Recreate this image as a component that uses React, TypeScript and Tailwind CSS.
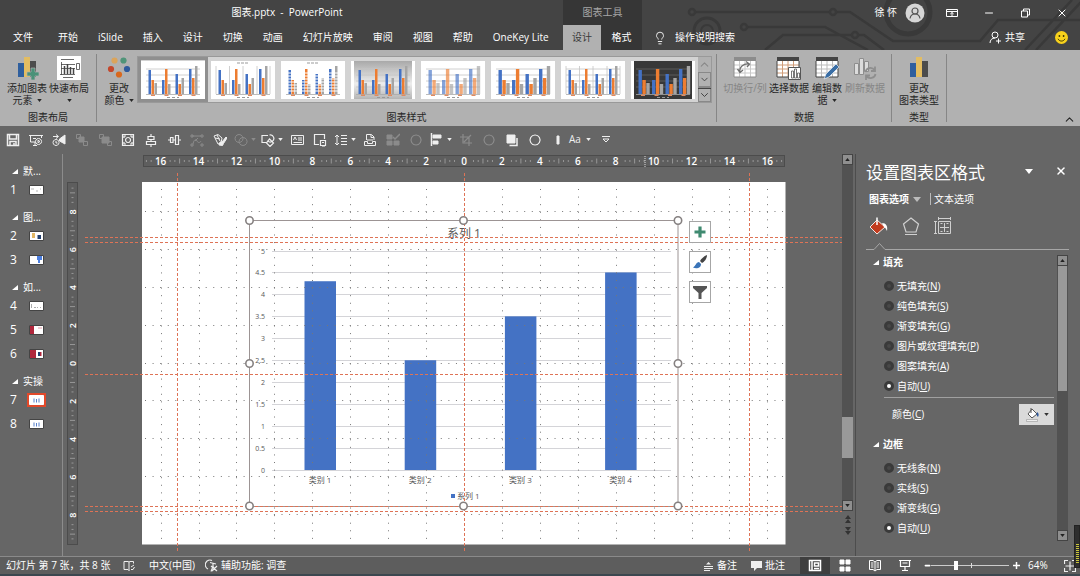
import React, { ReactNode } from 'react';
import clsx from 'clsx';
import { ChevronDown, ChevronUp, Lightbulb, Minus, X } from 'lucide-react';

const BLUE = '#4472c4';
const ORANGE = '#ed7d31';
const GUIDE = '#de7356';

const tabs = ['开始', 'iSlide', '插入', '设计', '切换', '动画', '幻灯片放映', '审阅', '视图', '帮助', 'OneKey Lite'];

const Caret = ({ className }: { className?: string }) => (
  <svg viewBox="0 0 6 4" width="5" height="3" className={clsx('inline-block shrink-0', className)} fill="currentColor">
    <path d="M0 0h6L3 4z" />
  </svg>
);

/* ---------- Title bar ---------- */

function Circuit() {
  return (
    <svg className="pointer-events-none absolute top-0 right-0" width="400" height="50" viewBox="680 0 400 50" fill="none" stroke="#393939" strokeWidth="2.5">
      <path d="M695 12H829M836 12H850L893 41H980L998 20H1080M748 27H825L868 50M765 50L783 35H852M858 35H864L884 50M1025 50L1072 0M1036 50L1083 0" />
      <circle cx="692" cy="12" r="3" />
      <circle cx="833" cy="12" r="3" />
      <circle cx="744" cy="27" r="3" />
      <circle cx="855" cy="35" r="3" />
      <circle cx="707" cy="31" r="13" strokeWidth="3" />
      <circle cx="707" cy="31" r="6" strokeWidth="2" />
      <circle cx="908" cy="12" r="22" strokeWidth="5" />
    </svg>
  );
}

function TitleBar() {
  return (
    <header className="relative bg-[#444444] text-white">
      <Circuit />
      <div className="relative flex h-[25px] items-center">
        <h1 className="w-[563px] pl-[11px] text-center text-[10px] whitespace-pre">图表.pptx  -  PowerPoint</h1>
        <div className="flex h-full w-[79px] items-center justify-center bg-[#363636] text-[10px] text-[#a6a6a6]">图表工具</div>
        <div className="ml-auto flex items-center">
          <span className="text-[10px]">徐 怀</span>
          <svg className="ml-2" width="20" height="20" viewBox="0 0 20 20">
            <circle cx="10" cy="10" r="9.5" fill="#d6d6d6" />
            <g fill="none" stroke="#555" strokeWidth="1.2">
              <circle cx="10" cy="8" r="3" />
              <path d="M5 15.5c.5-3 2.500-4.500 5-4.500s4.500 1.500 5 4.500" />
            </g>
          </svg>
          <button aria-label="功能区显示选项" className="ml-[21px]">
            <svg width="12" height="10" viewBox="0 0 12 10" fill="none" stroke="#fff">
              <path d="M.5 1.500h11v7H.5zM.5 3.500h11M6 8V4.500M4.300 6L6 4.500 7.700 6" />
            </svg>
          </button>
          <button aria-label="最小化" className="ml-[25px]"><Minus size={12} strokeWidth={2} /></button>
          <button aria-label="还原" className="ml-[25px]">
            <svg width="11" height="10" viewBox="0 0 11 10" fill="none" stroke="#fff">
              <path d="M1.500 3h6v6h-6zM3.500 3V1h6v6h-2" />
            </svg>
          </button>
          <button aria-label="关闭" className="mr-3 ml-[25px]"><X size={12} strokeWidth={2} /></button>
        </div>
      </div>
      <nav className="relative flex h-[25px] items-center text-[10px]">
        <div className="flex w-[563px] items-center">
          <button className="mr-[5px] ml-[3px] px-[10px] whitespace-nowrap">文件</button>
          {tabs.map(t => (
            <button key={t} className="px-[10px] whitespace-nowrap">{t}</button>
          ))}
        </div>
        <button className="h-full w-[38px] bg-[#b1b1b1] text-[#3a3a3a]">设计</button>
        <button className="h-full w-[41px] bg-[#363636]">格式</button>
        <label className="ml-[11px] flex items-center">
          <Lightbulb size={14} strokeWidth={1.500} />
          <input placeholder="操作说明搜索" className="ml-2 w-20 bg-transparent outline-none placeholder:text-white" />
        </label>
        <button className="ml-auto flex items-center gap-1">
          <svg width="12" height="13" viewBox="0 0 12 13" fill="none" stroke="#fff">
            <circle cx="6" cy="4" r="3" />
            <path d="M1 12c0-3 2-5 5-5M9.500 7.500v5M7 10h5" />
          </svg>
          共享
        </button>
        <svg className="mr-3 ml-[30px]" width="13" height="13" viewBox="0 0 13 13">
          <circle cx="6.5" cy="6.5" r="6.500" fill="#f8d21c" />
          <circle cx="4.4" cy="5" r=".9" fill="#3a3200" />
          <circle cx="8.600" cy="5" r=".9" fill="#3a3200" />
          <path d="M3 7.800c1.500 3 5.500 3 7 0" fill="none" stroke="#3a3200" />
        </svg>
      </nav>
    </header>
  );
}

/* ---------- Ribbon ---------- */

const ChartIcon = ({ plus }: { plus?: boolean }) => (
  <svg width="24" height="24" viewBox="0 0 24 24">
    <path d="M3 7h6v14H3z" fill="#2f5f9e" />
    <path d="M9 1h6v20H9z" fill="#e3bd62" />
    <path d="M15 5h6v16h-6z" fill="#4c4c4c" />
    {plus && <path d="M17 13h4v4h4v4h-4v4h-4v-4h-4v-4h4z" fill="#4a9178" stroke="#b1b1b1" strokeWidth=".7" transform="translate(-1 -1)" />}
  </svg>
);

const LayoutIcon = () => (
  <svg width="24" height="24" viewBox="0 0 24 24" fill="none" stroke="#444">
    <path d="M0 0h24v24H0z" fill="#fff" stroke="none" />
    <path d="M4 3.500h13M4.500 6v13M3 18.500h15M4 8.500h14M4 12.500h14M19.500 7.500h3v6h-3zM6 21.500h10" strokeWidth=".8" />
    <path d="M7.500 10v8M10.500 8v10M13.500 11v7M16.500 12v6" strokeWidth="1.500" />
  </svg>
);

const ColorsIcon = () => (
  <svg width="24" height="24" viewBox="0 0 24 24">
    <circle cx="7.500" cy="4.500" r="3.100" fill="#dba45b" />
    <circle cx="16.500" cy="4.500" r="3.100" fill="#4f9478" />
    <circle cx="4" cy="13" r="3.100" fill="#c4472b" />
    <circle cx="20" cy="13" r="3.100" fill="#2f5a9c" />
    <circle cx="12" cy="18.500" r="3.100" fill="#d9681d" />
  </svg>
);

const SheetGrid = ({ head, line }: { head: string; line: string }) => (
  <>
    <path d="M1 1h22v20H1z" fill="#fff" />
    <path d="M1 1h22v4H1z" fill={head} />
    <path d="M1 9h22M1 13h22M1 17h22M6.500 5v16M12 5v16M17.500 5v16" stroke={line} />
    <path d="M1 5v16h22V5" fill="none" stroke={head} />
  </>
);

const SwitchIcon = () => (
  <svg width="24" height="24" viewBox="0 0 24 24">
    <SheetGrid head="#8c8c8c" line="#c9c9c9" />
    <path d="M7 16c-1-5 4-9 9-8M13 5.500l3.500 2.500L14 11M4.500 13l2.500 3.500 3-2.500" fill="none" stroke="#6f6f6f" strokeWidth="1.300" />
  </svg>
);

const SelectIcon = () => (
  <svg width="26" height="24" viewBox="0 0 26 24">
    <SheetGrid head="#444" line="#cf9c78" />
    <path d="M12.500 11.500h12v12h-12z" fill="#fff" stroke="#555" />
    <path d="M15.500 15v7h2v-7zM18.500 13v9h2v-9zM21.500 17v5h2v-5z" fill="none" stroke="#555" strokeWidth=".8" />
  </svg>
);

const EditIcon = () => (
  <svg width="24" height="24" viewBox="0 0 24 24">
    <SheetGrid head="#444" line="#bbb" />
    <path d="M9 23l2-5L21 8l3 3-10 10z" fill="#3a6ea5" stroke="#fff" strokeWidth=".6" />
  </svg>
);

const RefreshIcon = () => (
  <svg width="24" height="24" viewBox="0 0 24 24" fill="none" stroke="#8e8e8e">
    <path d="M1.500 7.500h4v11h-4zM6.500 2.500h4v16h-4zM11.500 5.500h4v10h-4z" fill="#dcdcdc" />
    <path d="M12.500 16a5 5 0 0 1 9-2M22.500 18a5 5 0 0 1-9 2M22 10.500V15h-4M13 24v-4.500h4" strokeWidth="1.800" />
  </svg>
);

interface BigButtonProps {
  icon: ReactNode;
  lines: string[];
  caret?: boolean;
  disabled?: boolean;
  className: string;
}

const BigButton = ({ icon, lines, caret, disabled, className }: BigButtonProps) => (
  <button disabled={disabled} className={clsx('flex flex-col items-center pt-[6px] text-[10px] leading-3 whitespace-nowrap disabled:text-[#868686]', className)}>
    <span className="mb-px flex h-[25px] items-start">{icon}</span>
    {lines.map((line, i) => (
      <span key={i} className="flex min-h-3 items-center">
        {line}
        {caret && i === lines.length - 1 && <Caret className={clsx(line && 'ml-1')} />}
      </span>
    ))}
  </button>
);

const Group = ({ label, children }: { label: string; children: ReactNode }) => (
  <section className="flex flex-col justify-between pb-[3px]">
    <div className="flex">{children}</div>
    <div className="text-center text-[10px] leading-3">{label}</div>
  </section>
);

const Divider = () => <div className="my-1 w-px shrink-0 bg-[#868686]" />;

const styleBars = [[24, 14, 11], [14, 25, 10], [20, 10, 16], [25, 16, 28]];

interface ChartStyle {
  bg: string;
  grid?: 'h' | 'v' | 'both';
  faded?: boolean;
  striped?: boolean;
  wide?: boolean;
}

const chartStyles: ChartStyle[] = [
  { bg: '#ffffff', grid: 'h' },
  { bg: '#ffffff', grid: 'v' },
  { bg: '#ffffff', striped: true },
  { bg: 'url(#grayfade)', grid: 'h' },
  { bg: '#ffffff', grid: 'h', faded: true, wide: true },
  { bg: '#ffffff', grid: 'h', wide: true },
  { bg: '#ffffff', grid: 'both' },
  { bg: '#383838', grid: 'h', wide: true },
];

function StyleThumb({ style, selected }: { style: ChartStyle; selected: boolean }) {
  const { bg, grid, faded, striped, wide } = style;
  const inset = bg === '#ffffff' ? 0 : 3;
  const w = wide ? 3.400 : 2.500;
  const line = bg === '#383838' ? '#666' : '#c4c4c4';
  return (
    <button aria-label="图表样式" className={clsx('border-[3px]', selected ? 'border-[#8f8f8f]' : 'border-transparent')}>
      <svg width="64" height="38" viewBox="0 0 64 38" className="block">
        <defs>
          <linearGradient id="grayfade" x1="0" y1="0" x2="0" y2="1">
            <stop offset="0" stopColor="#a9a9a9" />
            <stop offset=".6" stopColor="#ededed" />
            <stop offset="1" stopColor="#b5b5b5" />
          </linearGradient>
        </defs>
        <path d="M0 0h64v38H0z" fill="#fff" />
        <rect x={inset} y="0" width={64 - inset * 2} height="38" fill={bg} />
        {grid && grid !== 'v' && <path d="M5 8h54M5 14h54M5 20h54M5 26h54" stroke={line} strokeWidth=".8" />}
        {grid && grid !== 'h' && <path d="M5 5v28M18.500 5v28M32 5v28M46 5v28M59 5v28" stroke={line} strokeWidth=".8" />}
        <path d="M5 33.500h54" stroke="#aaa" strokeWidth=".8" />
        <g fillOpacity={faded ? 0.650 : 1}>
          {styleBars.map((bars, g) =>
            bars.map((h, i) => (
              <rect key={`${g}-${i}`} x={7.500 + g * 13.500 + i * (w + 0.500)} y={33 - h} width={w} height={h} fill={[BLUE, ORANGE, '#a5a5a5'][i]} />
            ))
          )}
        </g>
        {striped && <path d="M5 12h54M5 15h54M5 18h54M5 21h54M5 24h54M5 27h54M5 30h54" stroke="#fff" strokeWidth="1" />}
        {[10, 23.500, 37, 50.500].map(x => <rect key={x} x={x} y="33.500" width="4" height="1.500" fill="#e08a60" />)}
        <path d="M26 36.500h12" stroke="#999" strokeDasharray="3 2" />
        {(grid === 'v' || striped) && <path d="M26 2h12" stroke="#999" strokeDasharray="3 1" />}
      </svg>
    </button>
  );
}

function Ribbon() {
  return (
    <div className="relative flex h-[76px] bg-[#b1b1b1] text-[#262626]">
      <Group label="图表布局">
        <BigButton className="w-[42px] ml-[6px]" icon={<ChartIcon plus />} lines={['添加图表', '元素']} caret />
        <BigButton className="w-[42px] mr-[6px]" icon={<LayoutIcon />} lines={['快速布局', '']} caret />
      </Group>
      <Divider />
      <Group label="图表样式">
        <BigButton className="w-10 pl-1" icon={<ColorsIcon />} lines={['更改', '颜色']} caret />
        <div className="mt-[6px] flex h-[47px] border border-[#999] bg-[#d3d3d3]">
          {chartStyles.map((style, i) => (
            <StyleThumb key={i} style={style} selected={i === 0} />
          ))}
          <div className="flex w-[13px] flex-col bg-[#b1b1b1] text-[#444]">
            <button aria-label="向上" className="flex h-[15px] items-center justify-center text-[#888]"><ChevronUp size={13} /></button>
            <button aria-label="向下" className="flex h-[15px] items-center justify-center border border-[#888]"><ChevronDown size={13} /></button>
            <button aria-label="其他" className="flex h-[15px] flex-col items-center justify-center border border-[#888]">
              <ChevronDown size={13} className="border-t border-current" />
            </button>
          </div>
        </div>
        <div className="w-1" />
      </Group>
      <Divider />
      <Group label="数据">
        <BigButton className="w-[46px] ml-[5px]" icon={<SwitchIcon />} lines={['切换行/列']} disabled />
        <BigButton className="w-[42px]" icon={<SelectIcon />} lines={['选择数据']} />
        <BigButton className="w-[34px]" icon={<EditIcon />} lines={['编辑数', '据']} caret />
        <BigButton className="w-[42px] mr-[5px]" icon={<RefreshIcon />} lines={['刷新数据']} disabled />
      </Group>
      <Divider />
      <Group label="类型">
        <BigButton className="mx-[6px] w-[42px]" icon={<ChartIcon />} lines={['更改', '图表类型']} />
      </Group>
      <Divider />
      <button aria-label="折叠功能区" className="mt-auto mr-1 ml-auto"><ChevronUp size={13} /></button>
    </div>
  );
}

/* ---------- Quick access toolbar ---------- */

interface Tool {
  name: string;
  art: ReactNode;
  dim?: boolean;
  caret?: boolean;
}

const tools: Tool[] = [
  { name: '保存', art: <path d="M1.500 1.500h11v11h-11zM3.500 2v4h7V2M4 12V8.500h6V12M8 10v2" strokeWidth="1.500" /> },
  { name: '放映', art: <path d="M0 2.500h14M1.500 3v6h5M12.500 3v2M4 12.500h4M6 9v3M4 5.500h3M9.500 5.500a3 3 0 1 0 .1 0zM9 7.300l2 1.200-2 1.200z" /> },
  { name: '动画窗格', art: <><path d="M4 6.500a3 3 0 1 0 .1 0zM4 8v2h1.500M1 3.500h5M4 1.500l2.500 2L4 5.500" /><path d="M7.500 6L13 2v9L7.500 8z" fill="currentColor" /></> },
  { name: '上移一层', dim: true, art: <><path d="M1.500 1.500h4v4h-4zM8.500 8.500h4v4h-4z" /><path d="M4 4h5v5H4z" fill="currentColor" /></> },
  { name: '下移一层', dim: true, art: <><path d="M1.500 1.500h4v4h-4zM9.500 8.500h4v4h-4z" /><path d="M4 4h7v6H4z" fill="currentColor" /></> },
  { name: '组合', art: <path d="M1.500 1.500h11v11h-11zM7 4.500a2.500 2.500 0 1 0 .1 0zM3 5V3h2M9 3h2v2M11 9v2H9M5 11H3V9" strokeWidth="1.200" /> },
  { name: '水平居中', art: <path d="M7 1v3M4 3.500h6v3H4zM7 6.500v2M2.500 8.500h9v3h-9zM7 12v2" strokeWidth="1.200" /> },
  { name: '垂直居中', art: <path d="M1 7h2M3.500 4.500h2.500v5H3.500zM6 7h2M8.500 2.500h3v9h-3zM12 7h2" strokeWidth="1.200" /> },
  { name: '编辑顶点', dim: true, art: <path d="M2 3h9M3 11c1-5 3-5 4-3s3 2 4 0M1 2h2v2H1zM11 2h2v2h-2zM1 11h2v2H1zM11 11h2v2h-2zM8 5L5 8" /> },
  { name: '格式刷', art: <><path d="M1 3l4-1.500 4 3.500-1 5-3 1zM2 5l5 1M4 2l3 6" /><path d="M6 12l1-3 2 0 4-5 1 1-3.500 5.500-1 2z" fill="currentColor" /></> },
  { name: '合并形状', dim: true, caret: true, art: <path d="M5 1.500a4 4 0 1 0 .1 0zM9 4.500a4 4 0 1 0 .1 0z" /> },
  { name: '形状', caret: true, art: <path d="M6 9.500H1v-7h6M8.500 2a3.500 3.500 0 1 1-2 5.500M8.500 6l4 4-3.500 3.500L5.500 10z" strokeWidth="1.200" /> },
  { name: '文本框', art: <path d="M1.500 2.500h12v9h-12zM3.500 7l1.500-3 1.500 3M8 5h4M8 7h4M3.500 9.500H12" /> },
  { name: '选择窗格', art: <path d="M6 11.500H1.500v-10h10V6M7.500 7.500h5v5h-5zM9 9.500h2M9 14h3" strokeWidth="1.200" /> },
  { name: '行距', caret: true, art: <path d="M3 2v10M1 4l2-2 2 2M1 10l2 2 2-2M7 2.500h6M7 5.500h6M7 8.500h6M7 11.500h6" /> },
  { name: '打印预览', art: <path d="M3.500 7V1.500h5l2.500 2.500v3M1.500 8.500h3v2h5v-2h3v4h-11zM8 2v2.500h3M4 7h6" /> },
  { name: '选择', dim: true, art: <><path d="M1 2h5v4H1zM1 8h5v4H1zM8 8h5v4H8z" fill="currentColor" /><path d="M7 4l2 2 5-5" strokeWidth="1.500" /></> },
  { name: '椭圆', dim: true, art: <path d="M7 2a5 5 0 1 0 .1 0z" strokeWidth="1.200" /> },
  { name: '对齐', caret: true, art: <><path d="M1.500 0v13" strokeWidth="1.500" /><path d="M3 2h8v3H3zM3 8h5v3H3z" fill="currentColor" /></> },
  { name: '裁剪', dim: true, art: <path d="M4 1v9h9M1 4h9v9M5 9l7-7" strokeWidth="1.200" /> },
  { name: '圆形', dim: true, art: <path d="M7 2a5 5 0 1 0 .1 0z" strokeWidth="1.200" /> },
  { name: '置于顶层', art: <><path d="M2 2h8v8H2z" fill="currentColor" /><path d="M12 5v7.500H4.500" strokeWidth="1.500" /></> },
  { name: '圆', art: <path d="M7 2a5 5 0 1 0 .1 0z" strokeWidth="1.200" /> },
  { name: '矩形', art: <path d="M6 3h2v8H6z" fill="currentColor" /> },
];

function QuickAccess() {
  return (
    <div className="flex h-7 items-center bg-[#666666] pb-px pl-px text-[#efefef]">
      {tools.map(t => (
        <button
          key={t.name}
          aria-label={t.name}
          className={clsx('flex items-center justify-center', t.caret ? 'w-[27px] gap-[3px]' : 'w-[23px]', t.dim && 'text-[#8b8b8b]')}
        >
          <svg width="14" height="14" viewBox="0 0 14 14" fill="none" stroke="currentColor">{t.art}</svg>
          {t.caret && <Caret />}
        </button>
      ))}
      <button className="flex w-[27px] items-center gap-[5px] text-[10px]">Aa <Caret /></button>
      <button aria-label="自定义" className="ml-[6px]">
        <svg width="8" height="7" viewBox="0 0 8 7" fill="none" stroke="currentColor"><path d="M0 .5h8M1 3h6L4 6z" /></svg>
      </button>
    </div>
  );
}

/* ---------- Slide list ---------- */

const sections = [
  { title: '默...', slides: [{ n: 1, art: <path d="M2 4h3M7 6h2M11 4h1" stroke="#999" strokeWidth=".7" /> }] },
  {
    title: '图...',
    slides: [
      { n: 2, art: <><path d="M3 2h3v5H3z" fill="#e2b765" /><path d="M8.500 4h3.500v4H8.500z" fill="#24406e" /></> },
      { n: 3, art: <path d="M8 1h5v4h-2v3H9V5H8z" fill="#4c7fe0" /> },
    ],
  },
  {
    title: '如...',
    slides: [
      { n: 4, art: <path d="M2.500 3v4M5 6.500h2M8 6.500h1M11 6.500h1" stroke="#888" strokeWidth=".7" /> },
      { n: 5, art: <><path d="M1 1h4v8H1z" fill="#b0273c" /><path d="M9 3h4" stroke="#e09aa4" /></> },
      { n: 6, art: <><path d="M1 1h6v8H1z" fill="#b0273c" /><path d="M9 3h2v4H9z" fill="#24406e" /><path d="M11 3h1.500v4H11z" fill="#b0273c" /></> },
    ],
  },
  {
    title: '实操',
    slides: [
      { n: 7, art: <path d="M5 3.500v4M7.500 4v3.500M10 3.500v4" stroke={BLUE} strokeWidth=".9" /> },
      { n: 8, art: <path d="M5 3.500v4M7.500 4v3.500M10 3.500v4" stroke={BLUE} strokeWidth=".9" /> },
    ],
  },
];

function SlideList() {
  return (
    <aside className="w-[62px] shrink-0 pt-[2px]">
      {sections.map(s => (
        <div key={s.title} className="pt-2">
          <div className="flex h-[14px] items-center gap-[5px] pl-3 text-[10px]">
            <svg width="6" height="5" viewBox="0 0 6 5" fill="#fff"><path d="M6 0v5H0z" /></svg>
            {s.title}
          </div>
          {s.slides.map(({ n, art }) => (
            <button key={n} className="flex h-6 w-full items-center pl-[10px] font-['Open_Sans'] text-xs">
              <span className="w-[18px] text-left">{n}</span>
              <svg width="17" height="12" viewBox="-1 -1 17 12" className={clsx(n === 7 && 'outline-2 -outline-offset-1 outline-[#e2492a]')}>
                <path d="M.5.5h14v9H.5z" fill="#fff" stroke={n === 7 ? '#fff' : '#444'} />
                {art}
              </svg>
            </button>
          ))}
        </div>
      ))}
    </aside>
  );
}

/* ---------- Canvas ---------- */

const STEP = 37.920; // two ruler units
const CX = 464;
const CY = 363.500;
const range = (from: number, to: number) => Array.from({ length: to - from + 1 }, (_, i) => from + i);

function HorizontalRuler() {
  return (
    <svg width="764" height="12" viewBox="78 155 764 12" className="mt-px block">
      <path d="M143 155h642v12H143z" fill="#4c4c4c" />
      <path d="M144 156h640v10H144z" fill="#5e5e5e" />
      {range(-67, 67).map(i => {
        const rest = ((i % 8) + 8) % 8;
        if (rest === 0 || rest === 1 || rest === 7) return null;
        const h = rest === 4 ? 2.500 : 1;
        const x = CX + (i * STEP) / 8;
        return <path key={i} d={`M${x} ${161 - h}V${161 + h}`} stroke="#a6a6a6" strokeWidth=".8" />;
      })}
      {range(-8, 8).map(i => (
        <text key={i} x={CX + i * STEP} y="164.500" fontSize="10" fontWeight="600" fill="#fff" textAnchor="middle">{Math.abs(i * 2)}</text>
      ))}
      <path d="M645 156v11" stroke="#ddd" strokeDasharray="1 1" />
    </svg>
  );
}

function VerticalRuler() {
  return (
    <svg width="11" height="363" viewBox="68 182 11 363" className="mt-7 ml-1 block shrink-0">
      <path d="M68 182h11v363H68z" fill="#4c4c4c" />
      <path d="M69 183h9v361h-9z" fill="#5e5e5e" />
      {range(-37, 37).map(i => {
        const rest = ((i % 8) + 8) % 8;
        if (rest === 0 || rest === 1 || rest === 7) return null;
        const w = rest === 4 ? 2.500 : 1;
        const y = CY + (i * STEP) / 8;
        return <path key={i} d={`M${73.500 - w} ${y}H${73.500 + w}`} stroke="#a6a6a6" strokeWidth=".8" />;
      })}
      {range(-4, 4).map(i => (
        <text key={i} transform={`translate(76.500 ${CY + i * STEP}) rotate(-90)`} fontSize="9" fontWeight="600" fill="#fff" textAnchor="middle">{Math.abs(i * 2)}</text>
      ))}
    </svg>
  );
}

const series = [
  { name: '类别 1', value: 4.3 },
  { name: '类别 2', value: 2.5 },
  { name: '类别 3', value: 3.5 },
  { name: '类别 4', value: 4.5 },
];

function Chart() {
  const y = (v: number) => 470 - v * 43.900;
  return (
    <g fill="#595959" fontSize="7">
      <text x="464" y="238" fontSize="12" textAnchor="middle">系列 1</text>
      {range(0, 10).map(i => (
        <g key={i}>
          <path d={`M272 ${Math.round(y(i / 2)) + 0.500}H671`} stroke="#d4d4d8" />
          <text x="265" y={y(i / 2) + 3} textAnchor="end">{i / 2}</text>
        </g>
      ))}
      {series.map((s, i) => (
        <g key={s.name}>
          <rect x={304.500 + i * 100.200} y={y(s.value)} width="31.500" height={470 - y(s.value)} fill={BLUE} />
          <text x={320 + i * 100.200} y="483" fontSize="8" textAnchor="middle">{s.name}</text>
        </g>
      ))}
      <path d="M451 494h4v4h-4z" fill={BLUE} />
      <text x="457" y="499" fontSize="8">系列 1</text>
    </g>
  );
}

function Canvas() {
  return (
    <svg width="764" height="388" viewBox="78 167 764 388" className="block">
      <path d="M142 182h643.500v362.500H142z" fill="#fff" />
      <Chart />
      <g stroke="#777" strokeDasharray="1 6.584">
        {range(-8, 8).filter(i => i !== 0).map(i => (
          <path key={i} d={`M${Math.round(CX + i * STEP) + 0.500} 189V544`} />
        ))}
        {range(-4, 4).map(i => (
          <path key={i} d={`M145 ${Math.round(CY + i * STEP) - 0.500}H785`} />
        ))}
      </g>
      <path d="M249.500 220.500h428.500v286h-428.500z" fill="none" stroke="#9c9494" />
      <g stroke={GUIDE} strokeDasharray="3 2">
        <path d="M177.500 173V551" />
        <path d="M464.500 173V551" />
        <path d="M749.500 173V551" />
        <path d="M85 237.500H842" />
        <path d="M85 242.500H842" />
        <path d="M85 374.500H842" />
        <path d="M85 506.500H842" />
        <path d="M85 511.500H842" />
      </g>
      <g fill="#fff" stroke="#858080" strokeWidth="1.600">
        {[249.500, 463.500, 678].map(cx =>
          [220.500, 363.500, 506].map(cy => (cx === 463.500 && cy === 363.500 ? null : <circle key={`${cx}${cy}`} cx={cx} cy={cy} r="3.700" />))
        )}
      </g>
    </svg>
  );
}

const chartTools = [
  { name: '图表元素', art: <path d="M8 2.500v11M2.500 8h11" stroke="#3f8a70" strokeWidth="3.200" /> },
  {
    name: '图表样式',
    art: (
      <>
        <path d="M15 1c-3 1-6 4-7 6l2 2c2-1 5-4 5-8z" fill="#444" />
        <path d="M7 8c-3 0-3 4-6 5.500 3 1.500 8 1 8-3.500z" fill="#3a74b8" />
      </>
    ),
  },
  { name: '图表筛选器', art: <path d="M1 2h14v2L9.500 9v6h-3V9L1 4z" fill="#555" /> },
];

function ScrollBar({ className, children }: { className: string; children: ReactNode }) {
  return (
    <div className={clsx('flex w-[11px] shrink-0 flex-col bg-[#525252]', className)}>
      <button aria-label="向上滚动" className="flex h-[11px] items-center justify-center border border-[#444] bg-[#8f8f8f] text-[#222]"><Caret className="rotate-180" /></button>
      {children}
      <button aria-label="向下滚动" className="flex h-[11px] items-center justify-center border border-[#444] bg-[#8f8f8f] text-[#222]"><Caret /></button>
    </div>
  );
}

function Workspace() {
  return (
    <main className="flex min-w-0 flex-1 border-l border-[#8c8c8c]">
      <div className="flex min-w-0 flex-1 overflow-hidden">
        <VerticalRuler />
        <div className="relative">
          <HorizontalRuler />
          <Canvas />
          <div className="absolute top-[67px] left-[611px] flex flex-col gap-2">
            {chartTools.map(t => (
              <button key={t.name} aria-label={t.name} className="flex size-[22px] items-center justify-center border border-[#a6a6a6] bg-white">
                <svg width="16" height="16" viewBox="0 0 16 16">{t.art}</svg>
              </button>
            ))}
          </div>
        </div>
      </div>
      <div className="flex flex-col text-[#333]">
        <ScrollBar className="h-[357px]">
          <div className="mt-[252px] mb-auto h-[41px] bg-[#999]" />
        </ScrollBar>
        <button aria-label="上一张" className="mx-auto mt-1"><svg width="6" height="8" viewBox="0 0 6 8" fill="currentColor"><path d="M3 0l3 4H0zM3 4l3 4H0z" /></svg></button>
        <button aria-label="下一张" className="mx-auto mt-1"><svg width="6" height="8" viewBox="0 0 6 8" fill="currentColor"><path d="M0 0h6L3 4zM0 4h6L3 8z" /></svg></button>
      </div>
    </main>
  );
}

/* ---------- Format pane ---------- */

const fillOptions = [['无填充', 'N'], ['纯色填充', 'S'], ['渐变填充', 'G'], ['图片或纹理填充', 'P'], ['图案填充', 'A'], ['自动', 'U']];
const lineOptions = [['无线条', 'N'], ['实线', 'S'], ['渐变线', 'G'], ['自动', 'U']];

function Radios({ name, options }: { name: string; options: string[][] }) {
  return (
    <div className="pt-[7px] pl-[18px]">
      {options.map(([label, key]) => (
        <label key={key} className="flex h-5 items-center gap-[3px]">
          <input
            type="radio"
            name={name}
            defaultChecked={key === 'U'}
            className="size-[10px] appearance-none rounded-full border-[3px] border-[#3a3a3a] bg-[#484848] checked:bg-white"
          />
          <span>{label}(<u>{key}</u>)</span>
        </label>
      ))}
    </div>
  );
}

const PaneHeading = ({ children }: { children: ReactNode }) => (
  <h3 className="flex h-[14px] items-center gap-1 pl-[7px] font-bold">
    <svg width="6" height="5" viewBox="0 0 6 5" fill="#fff"><path d="M6 0v5H0z" /></svg>
    {children}
  </h3>
);

function FormatPane() {
  return (
    <aside className="ml-[2px] w-[225px] shrink-0 border-l border-[#4d4d4d] pl-[10px] text-[10px]">
      <div className="flex h-[38px] items-center pr-[13px]">
        <h2 className="flex-1 text-[17px] leading-5">设置图表区格式</h2>
        <button aria-label="任务窗格选项" className="mb-1 mr-[22px]"><svg width="8" height="5" viewBox="0 0 8 5" fill="#fff"><path d="M0 0h8L4 5z" /></svg></button>
        <button aria-label="关闭窗格" className="mb-1"><X size={12} strokeWidth={3} /></button>
      </div>
      <div className="flex h-[14px] items-center pl-[3px]">
        <button className="flex items-center gap-1 font-bold">图表选项 <svg width="8" height="5" viewBox="0 0 8 5" fill="#bbb"><path d="M0 0h8L4 5z" /></svg></button>
        <button className="ml-[9px] border-l border-[#bbb] pl-[3px] leading-3">文本选项</button>
      </div>
      <div className="mt-2 flex h-6 items-center gap-3 pl-[3px]">
        <button aria-label="填充与线条">
          <svg width="20" height="20" viewBox="0 0 20 20">
            <path d="M8 4l8 7-8 7-7-7z" fill="#c23b1e" stroke="#f4e7e2" />
            <path d="M8 9V1.500" stroke="#fff" strokeWidth="1.500" />
            <path d="M13 7c4 0 6 3 5 8-1-2-2-4-3-4z" fill="#fff" />
          </svg>
        </button>
        <button aria-label="效果">
          <svg width="20" height="20" viewBox="0 0 20 20" fill="none" stroke="#d0d0d0" strokeWidth="1.200">
            <path d="M10 2l7.500 6-2.500 8H5L2.500 8zM4 18.500h12" />
          </svg>
        </button>
        <button aria-label="大小与属性">
          <svg width="20" height="20" viewBox="0 0 20 20" fill="none" stroke="#d0d0d0">
            <path d="M5.500 5.500h12v12h-12zM5.500 1v3M17.500 1v3M5.500 2.500h12M1 5.500h3M1 17.500h3M2.500 5.500v12M11.500 7v9M7 11.500h9" />
            <path d="M7.500 7.500h2M13.500 7.500h2M7.500 15.500h2M13.500 15.500h2" />
          </svg>
        </button>
      </div>
      <svg width="203" height="8" viewBox="0 0 203 8" className="mt-1" fill="none" stroke="#a6a6a6"><path d="M0 7.500h8L13.500 1.500 19 7.500h184" /></svg>
      <div className="mt-[5px] flex">
        <div className="min-w-0 flex-1">
          <PaneHeading>填充</PaneHeading>
          <Radios name="fill" options={fillOptions} />
          <div className="mr-[3px] ml-[18px] mt-px border-t border-[#a0a0a0] pt-[6px]">
            <div className="flex h-[21px] items-center justify-between pl-2">
              <span>颜色(<u>C</u>)</span>
              <button aria-label="填充颜色" className="flex h-full w-[35px] items-center justify-center gap-1 bg-[#dadada] text-[#333]">
                <svg width="15" height="15" viewBox="0 0 15 15">
                  <path d="M7 2l5 5-5 4-4-4z" fill="#fff" stroke="#555" />
                  <path d="M6 6V1" stroke="#555" />
                  <path d="M12 5c2 1 2 3 1 5-1-1-2-2-1-5z" fill="#2f5a9c" />
                  <path d="M1.500 12.500h11v2h-11z" fill="#eee" stroke="#999" strokeWidth=".6" />
                </svg>
                <Caret />
              </button>
            </div>
          </div>
          <div className="h-3" />
          <PaneHeading>边框</PaneHeading>
          <Radios name="line" options={lineOptions} />
        </div>
        <ScrollBar className="mr-3 h-[286px]">
          <div className="mx-px mb-auto h-[125px] bg-[#999]" />
        </ScrollBar>
      </div>
    </aside>
  );
}

/* ---------- Status bar ---------- */

const views: { name: string; art: ReactNode }[] = [
  { name: '普通视图', art: <path d="M1.500 1.500h11v10h-11zM4 2v9M6.500 4h4v3h-4zM6 9.500h5" strokeWidth="1.500" /> },
  { name: '幻灯片浏览', art: <path d="M2 1h4v4H2zM8 1h4v4H8zM2 8h4v4H2zM8 8h4v4H8z" fill="currentColor" /> },
  { name: '阅读视图', art: <path d="M7 3v9M1.500 1.500H5L7 3l2-1.500h3.500v9H9L7 12l-2-1.500H1.500zM3 4h2.500M3 6h2.500M3 8h2.500M8.500 4H11M8.500 6H11M8.500 8H11" /> },
  { name: '幻灯片放映', art: <path d="M1 1.500h12M2.500 2v5.500h9V2M7 8v3M4 11.500h6M4.500 4h5" strokeWidth="1.200" /> },
];

function StatusBar() {
  return (
    <footer className="flex h-5 items-center border-t border-b-2 border-t-[#8a8a8a] border-b-[#3b474f] bg-[#5d5d5d] text-[10px] whitespace-nowrap">
      <span className="w-[123px] pl-[6px]">幻灯片 第 7 张，共 8 张</span>
      <button aria-label="拼写检查" className="w-[26px]">
        <svg width="12" height="12" viewBox="0 0 12 12" fill="none" stroke="#eee"><path d="M6 2v9M6 2L5 1.500H1v8h4l1 1M6 2l1-.5h3.500v2M8 7l3-2M8 9.500h2L11.500 7" /></svg>
      </button>
      <button>中文(中国)</button>
      <button className="ml-[10px] flex items-center gap-[3px]">
        <svg width="13" height="13" viewBox="0 0 13 13" fill="none" stroke="#eee"><path d="M7 1.500A4.500 4.500 0 0 0 3 10M5 3.500l6 1.500M8 4.500v3l-2 5M8 7.500l3 4M6 7l6 5M12 7l-5 5" strokeWidth="1.200" /></svg>
        辅助功能: 调查
      </button>
      <button className="ml-auto flex items-center gap-1">
        <svg width="9" height="10" viewBox="0 0 9 10" stroke="#eee"><path d="M0 5.500h9M0 7.500h9M0 9.500h6" /><path d="M4.500 1L7 3.500H2z" fill="#eee" stroke="none" /></svg>
        备注
      </button>
      <button className="mr-[15px] ml-[14px] flex items-center gap-[3px]">
        <svg width="11" height="10" viewBox="0 0 11 10" fill="#eee"><path d="M0 0h11v7H6l-3 3V7H0z" /></svg>
        批注
      </button>
      {views.map((v, i) => (
        <button key={v.name} aria-label={v.name} className={clsx('flex h-full w-[30px] items-center justify-center', i === 0 && 'bg-[#3f3f3f]')}>
          <svg width="14" height="13" viewBox="0 0 14 13" fill="none" stroke="currentColor">{v.art}</svg>
        </button>
      ))}
      <button aria-label="缩小" className="ml-1 text-xs leading-4"><Minus size={7} strokeWidth={6} /></button>
      <div className="relative mr-1 flex items-center">
        <div className="absolute left-10 h-[5px] w-px bg-[#ddd]" />
        <input
          type="range"
          aria-label="缩放"
          defaultValue={31}
          className="h-px w-[78px] appearance-none bg-[#ccc] [&::-webkit-slider-thumb]:h-[9px] [&::-webkit-slider-thumb]:w-1 [&::-webkit-slider-thumb]:appearance-none [&::-webkit-slider-thumb]:bg-white"
        />
      </div>
      <button aria-label="放大">
        <svg width="7" height="7" viewBox="0 0 7 7" stroke="#fff" strokeWidth="1.500"><path d="M3.500 0v7M0 3.500h7" /></svg>
      </button>
      <span className="ml-2 w-9">64%</span>
      <button aria-label="适应窗口" className="mr-1">
        <svg width="12" height="12" viewBox="0 0 12 12" fill="none" stroke="#eee"><path d="M.5 4V.5H4M8 .5h3.500V4M11.500 8v3.500H8M4 11.500H.5V8M6 1.500v9M1.500 6h9" strokeWidth="1.200" /></svg>
      </button>
    </footer>
  );
}

export default function App() {
  return (
    <div className="relative flex min-h-screen flex-col bg-[#666666] font-['Open_Sans','Noto_Sans_CJK_SC',sans-serif] text-white">
      <TitleBar />
      <Ribbon />
      <QuickAccess />
      <div className="flex flex-1">
        <SlideList />
        <Workspace />
        <FormatPane />
      </div>
      <StatusBar />

      {/* Level meter docked to the window edge */}
      <div className="absolute right-0 bottom-2 flex h-[43px] w-[6px] flex-col justify-end gap-px border border-[#222] bg-[#2e2e2e] pb-1 pl-px">
        {range(0, 9).map(i => <div key={i} className="h-px bg-[#c9c43a]" />)}
      </div>
    </div>
  );
}
